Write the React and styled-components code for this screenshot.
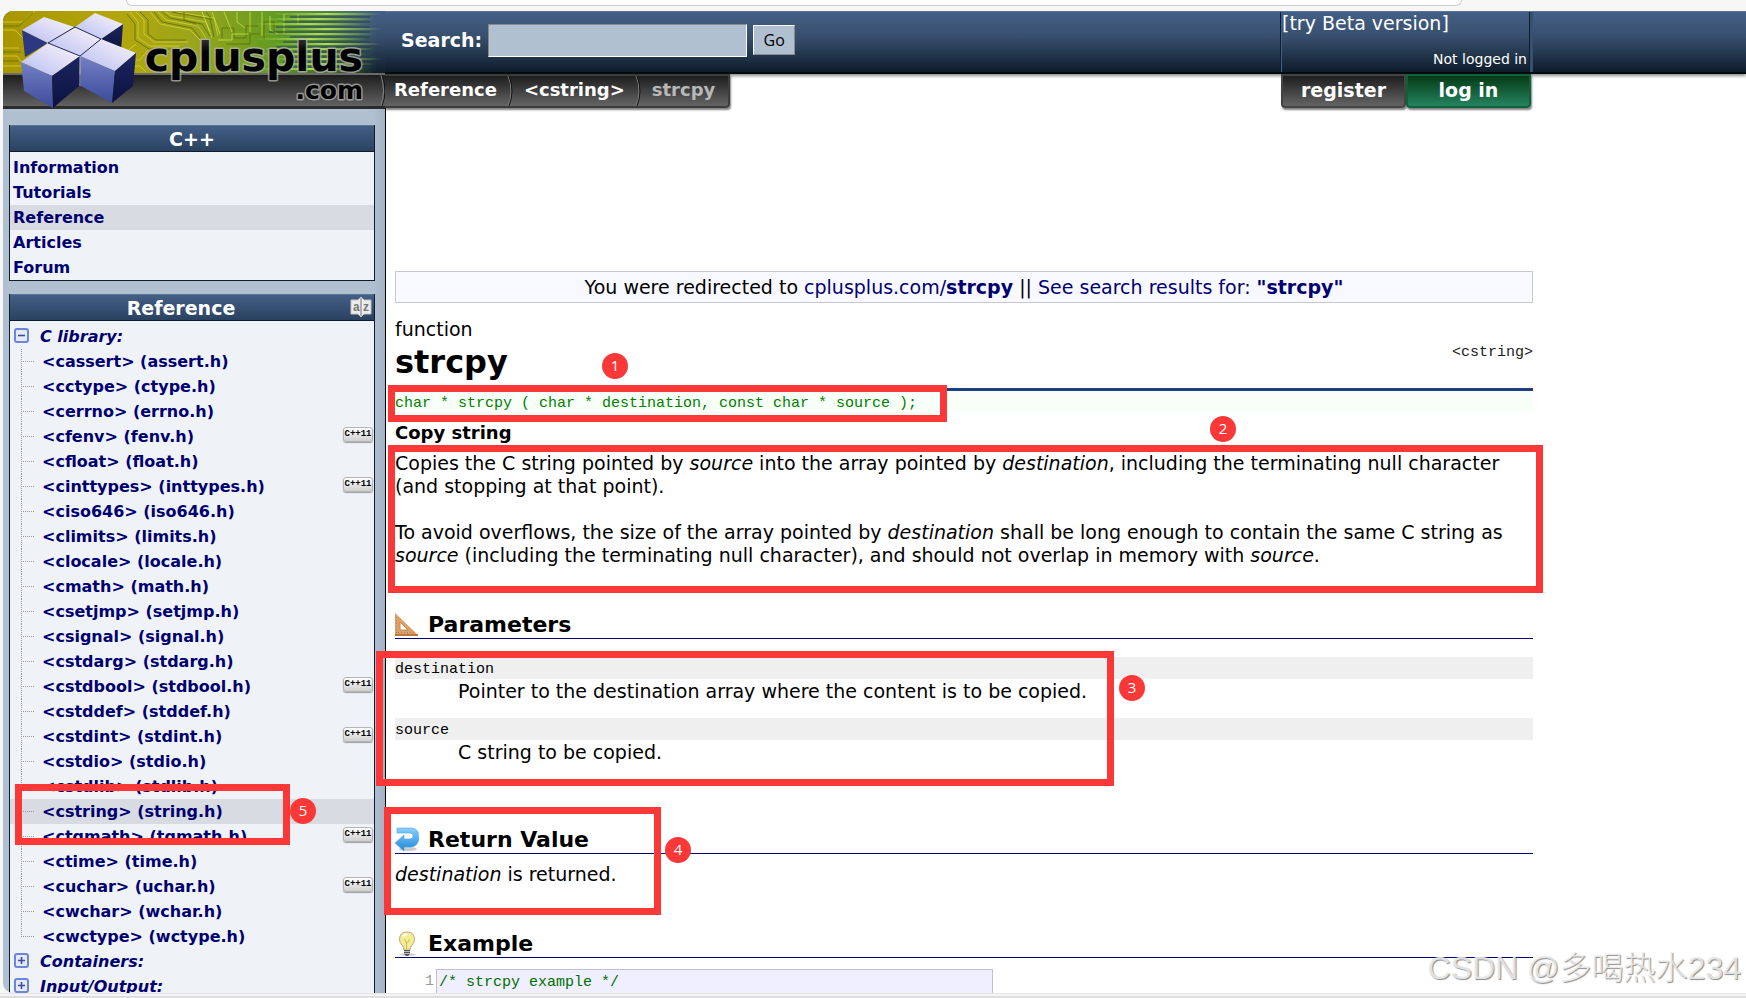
import React from "react";
import styled, { createGlobalStyle, css } from "styled-components";

const GlobalStyle = createGlobalStyle`
  * {
    box-sizing: border-box;
  }
  body {
    margin: 0;
    background-color: #f7f7f7;
    color: black;
    font-family: "DejaVu Sans", Verdana, sans-serif;
    font-size: 19px;
  }
`;

const mono = css`
  font-family: "Liberation Mono", monospace;
  font-size: 15px;
`;

const barGradient = "linear-gradient(#435f86, #38506f 40%, #0e1c2b)";
const panelGradient = "linear-gradient(#435f86, #2a4261)";
const tabGradient = "linear-gradient(#1e1e1e, #646464)";

const Screen = styled.div`
  position: relative;
  display: flex;
  flex-direction: column;
  height: 100vh;
  overflow: hidden;
`;

const AddressBar = styled.div`
  flex: none;
  height: 6px;
  margin: 0 284px 5px 126px;
  background-color: white;
  border: 1px solid #cccccc;
  border-top: 0;
  border-radius: 0 0 16px 16px;
`;

const Page = styled.div`
  flex: 1;
  min-height: 0;
  margin-left: 3px;
  overflow: hidden;
  background-color: white;
  border-radius: 10px 0 0 10px;
`;

const StatusStrip = styled.div`
  flex: none;
  height: 5px;
  border-top: 1px solid #e6e6e6;
  border-bottom: 2px solid #dedede;
  background-color: #f4f4f4;
`;

const Header = styled.header`
  display: grid;
  grid-template-columns: 382px 1fr;
  grid-template-rows: 63px 34px;
`;

const LogoLink = styled.a`
  position: relative;
  grid-row: 1 / 3;
  svg {
    display: block;
  }
`;

const TopBar = styled.div`
  background: ${barGradient};
  border-top: 1px solid #5a7499;
  border-bottom: 2px solid #05080c;
  box-shadow: 0 2px 3px rgba(0, 0, 0, 0.45);
`;

const BarInner = styled.div`
  display: flex;
  justify-content: space-between;
  height: 100%;
  max-width: 1148px;
`;

const SearchForm = styled.form`
  display: flex;
  align-items: center;
  margin: 0 0 4px 16px;
  color: white;
  label {
    font-weight: bold;
  }
  input {
    width: 259px;
    height: 33px;
    margin: 0 6px;
    padding: 0 6px;
    font: inherit;
    background-color: #b0c0d0;
    border: 1px solid #8a8a8a;
    border-right-color: white;
    border-bottom-color: white;
  }
  button {
    width: 42px;
    height: 30px;
    padding: 0;
    font-family: "Open Sans", sans-serif;
    font-size: 16px;
    color: black;
    background-color: #b0c0d0;
    border: 1px solid #8a8a8a;
    border-left-color: white;
    border-top-color: white;
  }
`;

const UserBox = styled.div`
  display: flex;
  flex-direction: column;
  justify-content: space-between;
  width: 249px;
  margin-right: 3px;
  padding-bottom: 2px;
  color: white;
  line-height: 22px;
  border-left: 1px solid #435f86;
  border-right: 1px solid #0e1c2b;
  box-shadow: -1px 0 #0e1c2b, 3px 0 #38506f;
  a {
    color: inherit;
    text-decoration: none;
  }
`;

const Status = styled.span`
  padding-right: 2px;
  font-size: 14px;
  text-align: right;
`;

const Crumbs = styled.nav`
  display: flex;
  height: 34px;
  padding-right: 13px;
  background: ${tabGradient};
  border: 2px solid #3c3c3c;
  border-left: 0;
  border-radius: 0 0 4px 0;
  box-shadow: 1px 2px 2px rgba(0, 0, 0, 0.5);
`;

const Crumb = styled.a`
  display: flex;
  align-items: center;
  font-size: 18px;
  font-weight: bold;
  line-height: 24px;
  padding-bottom: 2px;
  color: ${({ $current }) => ($current ? "#b8b8b8" : "white")};
  text-decoration: none;
  svg {
    margin: 0 10px -2px 10px;
  }
  &:first-child {
    padding-left: 9px;
  }
`;

const Tabs = styled.div`
  display: flex;
  width: 250px;
  margin-right: 2px;
`;

const Tab = styled.a`
  flex: 1;
  height: 34px;
  line-height: 28px;
  font-weight: bold;
  text-align: center;
  text-decoration: none;
  color: white;
  background: ${({ $green }) =>
    $green ? "linear-gradient(#063b16, #25835f)" : tabGradient};
  border: 2px solid ${({ $green }) => ($green ? "#10603c" : "#444444")};
  border-radius: 0 0 4px 4px;
  box-shadow: 1px 2px 2px rgba(0, 0, 0, 0.5);
`;

const Columns = styled.div`
  display: flex;
`;

const Sidebar = styled.aside`
  flex: none;
  width: 383px;
  padding: 17px 10px 0 6px;
  background: linear-gradient(90deg, #b0c0d0 97%, #a3b3c4);
  border-right: 1px solid black;
`;

const Panel = styled.section`
  margin-bottom: 13px;
  background-color: #eff3f8;
  border: 1px solid #0e1c2b;
  border-top: 0;
`;

const PanelTitle = styled.h2`
  display: flex;
  align-items: center;
  height: 27px;
  margin: 0 0 3px;
  padding: 0 2px;
  font-size: 19px;
  line-height: 22px;
  color: white;
  background: ${panelGradient};
  border-top: 1px solid #5a7499;
  border-bottom: 1px solid #0e1c2b;
  span {
    flex: 1;
    text-align: center;
  }
  svg {
    flex: none;
  }
`;

const List = styled.ul`
  margin: 0;
  padding: 0;
  list-style: none;
`;

const Row = styled.li`
  display: flex;
  align-items: center;
  height: 25px;
  padding: 0 1px 0 3px;
  background-color: ${({ $selected }) => ($selected ? "#d8dbe1" : "transparent")};
`;

const NavLink = styled.a`
  flex: 1;
  font-size: 16px;
  font-weight: bold;
  font-style: ${({ $group }) => ($group ? "italic" : "normal")};
  color: #000070;
  text-decoration: none;
`;

const Toggle = styled.button`
  display: flex;
  width: 15px;
  height: 15px;
  margin: 0 11px 2px 1px;
  padding: 0;
  background: none;
  border: 0;
`;

const dots = dir =>
  `repeating-linear-gradient(${dir}, #9a9a9a 0 1px, transparent 1px 2px)`;

const Branch = styled.span`
  width: 14px;
  height: 25px;
  margin: 0 7px 0 8px;
  background: ${dots("180deg")} 0 0 / 1px ${({ $last }) =>
      $last ? "12px" : "25px"} no-repeat,
    ${dots("90deg")} 0 12px / 14px 1px no-repeat;
`;

const Cpp11 = styled.span`
  width: 30px;
  height: 15px;
  margin-bottom: 4px;
  font: bold 9px/13px "Liberation Mono", monospace;
  text-align: center;
  color: black;
  background: linear-gradient(white, #d0d0d0);
  border: 1px solid #b4b4b4;
  border-radius: 3px;
  box-shadow: 0 1px 1px rgba(0, 0, 0, 0.35);
`;

const Main = styled.main`
  flex: 1;
  max-width: 1147px;
  padding: 163px 0 0 9px;
  line-height: 23px;
`;

const Redirect = styled.div`
  height: 32px;
  margin-bottom: 15px;
  line-height: 30px;
  text-align: center;
  background-color: #f8f8ff;
  border: 1px solid #c8c8d0;
  a {
    color: #000070;
    text-decoration: none;
  }
`;

const TitleRow = styled.div`
  display: flex;
  justify-content: space-between;
  align-items: center;
  height: 70px;
  padding-bottom: 6px;
`;

const Title = styled.h1`
  margin: 0;
  font-size: 32px;
  line-height: 42px;
`;

const HeaderFile = styled.a`
  ${mono}
  margin-top: 4px;
  color: #202020;
  text-decoration: none;
`;

const Prototype = styled.div`
  ${mono}
  height: 25px;
  margin-bottom: 8px;
  line-height: 26px;
  color: #008000;
  background-color: #f8fff8;
  border-top: 3px solid #1f3f80;
`;

const Summary = styled.div`
  margin-bottom: 8px;
  font-size: 18px;
  font-weight: bold;
`;

const Text = styled.p`
  margin: 0 0 23px;
`;

const Section = styled.section`
  margin-top: 40px;
`;

const SectionTitle = styled.h3`
  display: flex;
  align-items: center;
  gap: 9px;
  height: 32px;
  margin: 0 0 9px;
  padding-top: 4px;
  font-size: 22px;
  border-bottom: 1px solid #000080;
`;

const Params = styled.dl`
  margin: 18px 0 59px;
  dt {
    ${mono}
    height: 22px;
    line-height: 25px;
    background-color: #efefef;
  }
  dd {
    margin: 0 0 16px 63px;
    padding-top: 1px;
    line-height: 22px;
  }
`;

const Code = styled.div`
  ${mono}
  display: flex;
  margin: 11px 0 0 30px;
  line-height: 26px;
  color: #9a9a9a;
  pre {
    width: 557px;
    height: 120px;
    margin: 0 0 0 2px;
    padding: 0 2px;
    font: inherit;
    color: #007000;
    background-color: #efefff;
    border: 1px solid #c0c0d0;
  }
`;

// Review marks drawn over the page
const Mark = styled.div`
  position: absolute;
  left: ${({ $x }) => $x}px;
  top: ${({ $y }) => $y}px;
  width: ${({ $w }) => $w}px;
  height: ${({ $h }) => $h}px;
  border: 7px solid #fb3838;
  pointer-events: none;
`;

const Pin = styled.div`
  position: absolute;
  left: ${({ $x }) => $x}px;
  top: ${({ $y }) => $y}px;
  width: 26px;
  height: 26px;
  font: 15px/24px "Open Sans", sans-serif;
  text-align: center;
  color: white;
  background-color: #fb3838;
  border-radius: 50%;
`;

const Watermark = styled.div`
  position: absolute;
  right: 5px;
  bottom: 11px;
  font: 300 32px/38px "Liberation Sans", "Noto Sans CJK SC", sans-serif;
  color: rgba(235, 235, 235, 0.9);
  text-shadow: 1px 1px 1px #8c8c8c;
`;

const Logo = () => (
  <svg width="382" height="98" viewBox="3 11 382 98">
    <defs>
      <linearGradient id="board">
        <stop offset="0" stopColor="#a89600" />
        <stop offset="0.3" stopColor="#b3a60a" />
        <stop offset="0.5" stopColor="#9aa51c" />
        <stop offset="0.72" stopColor="#5f9a22" />
        <stop offset="0.86" stopColor="#5f9a22" stopOpacity="0.6" />
        <stop offset="0.98" stopColor="#5f9a22" stopOpacity="0" />
      </linearGradient>
      <linearGradient id="bar" x2="0" y2="1">
        <stop offset="0" stopColor="#435f86" />
        <stop offset="0.4" stopColor="#38506f" />
        <stop offset="1" stopColor="#0e1c2b" />
      </linearGradient>
      <linearGradient id="tab" x2="0" y2="1">
        <stop offset="0" stopColor="#1e1e1e" />
        <stop offset="1" stopColor="#646464" />
      </linearGradient>
      <linearGradient id="top" x1="1" y1="0" x2="0" y2="1">
        <stop offset="0" stopColor="#fff6fb" />
        <stop offset="1" stopColor="#b4bcf2" />
      </linearGradient>
      <linearGradient id="front" x2="0" y2="1">
        <stop offset="0" stopColor="#7480c4" />
        <stop offset="1" stopColor="#3c4c9c" />
      </linearGradient>
      <linearGradient id="side" x2="0" y2="1">
        <stop offset="0" stopColor="#1c2560" />
        <stop offset="1" stopColor="#0b1240" />
      </linearGradient>
      <linearGradient id="ink" x2="0" y2="1">
        <stop offset="0" stopColor="#484848" />
        <stop offset="0.4" stopColor="#000" />
      </linearGradient>
      <linearGradient id="fade">
        <stop offset="0" stopColor="#b6e45c" stopOpacity="0" />
        <stop offset="0.5" stopColor="#b6e45c" stopOpacity="0.9" />
        <stop offset="1" stopColor="#b6e45c" stopOpacity="0" />
      </linearGradient>
    </defs>
    <rect x="3" y="11" width="382" height="63" fill="url(#bar)" />
    <rect x="3" y="11" width="382" height="63" fill="url(#board)" />
    <g fill="none" stroke="#e2dc40" strokeOpacity="0.65">
      <path d="M3 22h20l12-11M3 30h12l8 8M3 48h16M3 56h14l6 8M3 66h18M130 12l8 10v16l12 8h30M136 12l8 8v14l10 8h34M124 60h16l8-10M126 52l10-8M150 12l10 12 30 6 10 10" />
      <path d="M128 66h12l6 6M158 12l8 8 32 6 8 12M166 12l6 4 34 6 6 16M176 12l38 6 4 18" />
    </g>
    <g fill="none" stroke="#5c6a00" strokeOpacity="0.75">
      <path d="M3 26h16l14-13M3 52h18M3 61h16M127 14l8 10v16l14 9h28M140 12l8 8v14l8 6h30M154 12l8 10 30 6 8 10M162 12l8 6 32 6 8 12M172 12l38 7 4 18" />
      <path d="M222 38v-10h12v10h12v-12h12M226 44h24v-10h10M264 40v-18h10v12h12M184 12v8l12 4M206 12l6 8" />
    </g>
    <g fill="none" stroke="#d4ea4c" strokeOpacity="0.7">
      <path d="M202 12l8 20M212 12l8 22M224 12l8 20M237 12v10l8 6M250 12v20M262 12v24M270 16v14l8 4M284 14v20M298 14v10M218 40h14v-6h16" />
    </g>
    <g fill="url(#fade)">
      {Array.from({ length: 12 }, (_, i) => (
        <rect key={i} x={270 - (i % 3) * 8} y={13 + i * 5} width="112" height="2" />
      ))}
    </g>
    <g fill="#203c5c" fillOpacity="0.45">
      {Array.from({ length: 11 }, (_, i) => (
        <rect key={i} x={290 - (i % 4) * 7} y={16 + i * 5} width={80 + (i % 4) * 7} height="2" />
      ))}
    </g>
    <rect x="3" y="73" width="382" height="2" fill="#6a6a6a" />
    <rect x="3" y="75" width="382" height="32" fill="url(#tab)" />
    <rect x="3" y="106" width="382" height="3" fill="#2c2c2c" />
    <path d="M381 75q5 16 0 31" fill="none" stroke="#8a8a8a" />
    <path d="M382 75q6 16 0 31" fill="none" stroke="#161616" />

    <g strokeLinejoin="round">
      <path d="M22 30L48 43L25 57z" fill="#2c3880" />
      <path d="M123 24L121 51L101 39z" fill="url(#side)" />
      <path d="M22 30L44 17L74 27L48 43z" fill="url(#top)" />
      <path d="M75 27L95 13L123 24L101 39z" fill="url(#top)" />
      <path d="M48 43L75 27L101 39L80 56z" fill="url(#top)" />
      <path d="M21 62L48 43L80 56L52 76z" fill="url(#top)" />
      <path d="M80 56L101 39L136 53L115 71z" fill="url(#top)" />
      <path d="M21 62L52 76L53 108L24 91z" fill="url(#front)" />
      <path d="M52 76L80 56L79 86L53 108z" fill="url(#side)" />
      <path d="M80 56L115 71L112 103L81 86z" fill="url(#front)" />
      <path d="M115 71L136 53L133 86L112 103z" fill="url(#side)" />
      <path d="M75 27L101 39M48 43L80 56M48 43L75 27M101 39L80 56" stroke="#232c5c" fill="none" />
      <path d="M80 56v30" stroke="#9aa6e0" fill="none" />
    </g>

    <g
      fontFamily="DejaVu Sans"
      fontWeight="bold"
      textAnchor="end"
      fill="url(#ink)"
      stroke="#b4b4b0"
      strokeOpacity="0.75"
      strokeWidth="3"
      strokeLinejoin="round"
      paintOrder="stroke"
    >
      <text x="363" y="71" fontSize="41">cplusplus</text>
      <text x="363" y="99" fontSize="25">.com</text>
    </g>
  </svg>
);

const Chevron = () => (
  <svg width="7" height="30" viewBox="0 0 7 30" fill="none">
    <path d="M1 0Q7 15 1 30" stroke="#808080" />
    <path d="M2 0Q8 15 2 30" stroke="#161616" />
  </svg>
);

const ToggleIcon = ({ open }) => (
  <svg width="15" height="15" viewBox="0 0 15 15">
    <rect x="1" y="1" width="13" height="13" rx="2" fill="#e4eafc" stroke="#6c84dc" strokeWidth="2" />
    <path d={open ? "M4 7.5h7" : "M4 7.5h7M7.5 4v7"} stroke="#3c4c9c" strokeWidth="1.6" />
  </svg>
);

const IndexIcon = () => (
  <svg width="22" height="21" viewBox="0 0 22 21" role="img" aria-label="Index">
    <path d="M1 3h7l3-3 3 3h7v14h-7l-3 3-3-3H1z" fill="#ececec" stroke="#c4c4c4" />
    <path d="M11 1v18" stroke="#777" />
    <g fontFamily="Liberation Sans" fontWeight="bold" fontSize="12" fill="#777">
      <text x="3" y="14">a</text>
      <text x="13" y="14">z</text>
    </g>
  </svg>
);

const RulerIcon = () => (
  <svg width="24" height="25" viewBox="0 0 24 25">
    <path d="M0 1L23 23v1H0z" fill="#dca06a" />
    <path d="M0 22h23v2H0z" fill="#b87840" />
    <path d="M5 10v8h8z" fill="white" stroke="#c48a54" />
    <path d="M1.500 5v16M3 20.500h16" stroke="#b87c48" strokeDasharray="1 2" />
  </svg>
);

const ReturnIcon = () => (
  <svg width="24" height="25" viewBox="0 0 24 25">
    <defs>
      <linearGradient id="arrow" x2="0" y2="1">
        <stop offset="0" stopColor="#8cd0fa" />
        <stop offset="1" stopColor="#1c88d8" />
      </linearGradient>
    </defs>
    <ellipse cx="13" cy="22" rx="9" ry="2" fill="#cccccc" />
    <path
      d="M2 1h15q7 1 7 9t-7 10H9v4L0 16l9-8v4h6q3 0 3-3t-3-3H2z"
      fill="url(#arrow)"
      stroke="#4aa4e4"
      strokeWidth="0.6"
    />
  </svg>
);

const BulbIcon = () => (
  <svg width="24" height="25" viewBox="0 0 24 25">
    <ellipse cx="13" cy="23.5" rx="8" ry="1.5" fill="#d4d4d4" />
    <path
      d="M12 1q7.500 0 7.500 7.500 0 3-2.500 5.500-2 2-2 5H9q0-3-2-5-2.500-2.500-2.500-5.500Q4.500 1 12 1z"
      fill="#f1ee9a"
      stroke="#c8a070"
    />
    <path d="M9.500 8l2 4v6M14.500 8l-2 4" stroke="#d0b840" fill="none" />
    <path d="M8 5q2-2 4-2" stroke="white" strokeWidth="2" fill="none" />
    <path d="M9 19h6v4l-2 2h-2l-2-2z" fill="#555" />
    <path d="M9 20.500h6M9 22.500h6" stroke="#bbb" />
  </svg>
);

const sections = ["Information", "Tutorials", "Reference", "Articles", "Forum"];

const headers = [
  "assert", "ctype", "errno", "fenv", "float", "inttypes", "iso646", "limits",
  "locale", "math", "setjmp", "signal", "stdarg", "stdbool", "stddef", "stdint",
  "stdio", "stdlib", "string", "tgmath", "time", "uchar", "wchar", "wctype"
];

const cpp11 = ["fenv", "inttypes", "stdbool", "stdint", "tgmath", "uchar"];

const marks = [
  { x: 388, y: 385, w: 559, h: 37 },
  { x: 388, y: 445, w: 1155, h: 148 },
  { x: 376, y: 651, w: 738, h: 135 },
  { x: 384, y: 807, w: 277, h: 108 },
  { x: 15, y: 784, w: 275, h: 61 }
];

const pins = [
  { x: 602, y: 353 },
  { x: 1210, y: 416 },
  { x: 1119, y: 675 },
  { x: 665, y: 837 },
  { x: 290, y: 798 }
];

const Group = ({ name, open }) => (
  <Row>
    <Toggle type="button" aria-label={name}>
      <ToggleIcon open={open} />
    </Toggle>
    <NavLink $group href="#">
      {name}:
    </NavLink>
  </Row>
);

const App = () => (
  <Screen>
    <GlobalStyle />
    <AddressBar />
    <Page>
      <Header>
        <LogoLink href="#" aria-label="cplusplus.com">
          <Logo />
        </LogoLink>
        <TopBar>
          <BarInner>
            <SearchForm onSubmit={e => e.preventDefault()}>
              <label htmlFor="search">Search:</label>
              <input id="search" type="text" />
              <button type="submit">Go</button>
            </SearchForm>
            <UserBox>
              <a href="#">[try Beta version]</a>
              <Status>Not logged in</Status>
            </UserBox>
          </BarInner>
        </TopBar>
        <BarInner>
          <Crumbs>
            <Crumb href="#">Reference</Crumb>
            <Crumb href="#">
              <Chevron />
              &lt;cstring&gt;
            </Crumb>
            <Crumb href="#" $current>
              <Chevron />
              strcpy
            </Crumb>
          </Crumbs>
          <Tabs>
            <Tab href="#">register</Tab>
            <Tab href="#" $green>
              log in
            </Tab>
          </Tabs>
        </BarInner>
      </Header>
      <Columns>
        <Sidebar>
          <Panel>
            <PanelTitle>
              <span>C++</span>
            </PanelTitle>
            <List>
              {sections.map(name => (
                <Row key={name} $selected={name === "Reference"}>
                  <NavLink href="#">{name}</NavLink>
                </Row>
              ))}
            </List>
          </Panel>
          <Panel>
            <PanelTitle>
              <span>Reference</span>
              <IndexIcon />
            </PanelTitle>
            <List>
              <Group name="C library" open />
              {headers.map(name => (
                <Row key={name} $selected={name === "string"}>
                  <Branch $last={name === "wctype"} />
                  <NavLink href="#">
                    &lt;c{name}&gt; ({name}.h)
                  </NavLink>
                  {cpp11.includes(name) && <Cpp11>C++11</Cpp11>}
                </Row>
              ))}
              <Group name="Containers" />
              <Group name="Input/Output" />
            </List>
          </Panel>
        </Sidebar>
        <Main>
          <Redirect>
            You were redirected to{" "}
            <a href="#">
              cplusplus.com/<b>strcpy</b>
            </a>{" "}
            ||{" "}
            <a href="#">
              See search results for: <b>"strcpy"</b>
            </a>
          </Redirect>
          <TitleRow>
            <div>
              function
              <Title>strcpy</Title>
            </div>
            <HeaderFile href="#">&lt;cstring&gt;</HeaderFile>
          </TitleRow>
          <Prototype>
            char * strcpy ( char * destination, const char * source );
          </Prototype>
          <Summary>Copy string</Summary>
          <Text>
            Copies the C string pointed by <i>source</i> into the array pointed by{" "}
            <i>destination</i>, including the terminating null character (and
            stopping at that point).
          </Text>
          <Text>
            To avoid overflows, the size of the array pointed by{" "}
            <i>destination</i> shall be long enough to contain the same C string
            as <i>source</i> (including the terminating null character), and
            should not overlap in memory with <i>source</i>.
          </Text>
          <Section>
            <SectionTitle>
              <RulerIcon />
              Parameters
            </SectionTitle>
            <Params>
              <dt>destination</dt>
              <dd>Pointer to the destination array where the content is to be copied.</dd>
              <dt>source</dt>
              <dd>C string to be copied.</dd>
            </Params>
          </Section>
          <Section>
            <SectionTitle>
              <ReturnIcon />
              Return Value
            </SectionTitle>
            <Text>
              <i>destination</i> is returned.
            </Text>
          </Section>
          <Section>
            <SectionTitle>
              <BulbIcon />
              Example
            </SectionTitle>
            <Code>
              1<pre>/* strcpy example */</pre>
            </Code>
          </Section>
        </Main>
      </Columns>
    </Page>
    <StatusStrip />
    {marks.map(({ x, y, w, h }, i) => (
      <Mark key={i} $x={x} $y={y} $w={w} $h={h} />
    ))}
    {pins.map(({ x, y }, i) => (
      <Pin key={i} $x={x} $y={y}>
        {i + 1}
      </Pin>
    ))}
    <Watermark>CSDN @多喝热水234</Watermark>
  </Screen>
);

export default App;
